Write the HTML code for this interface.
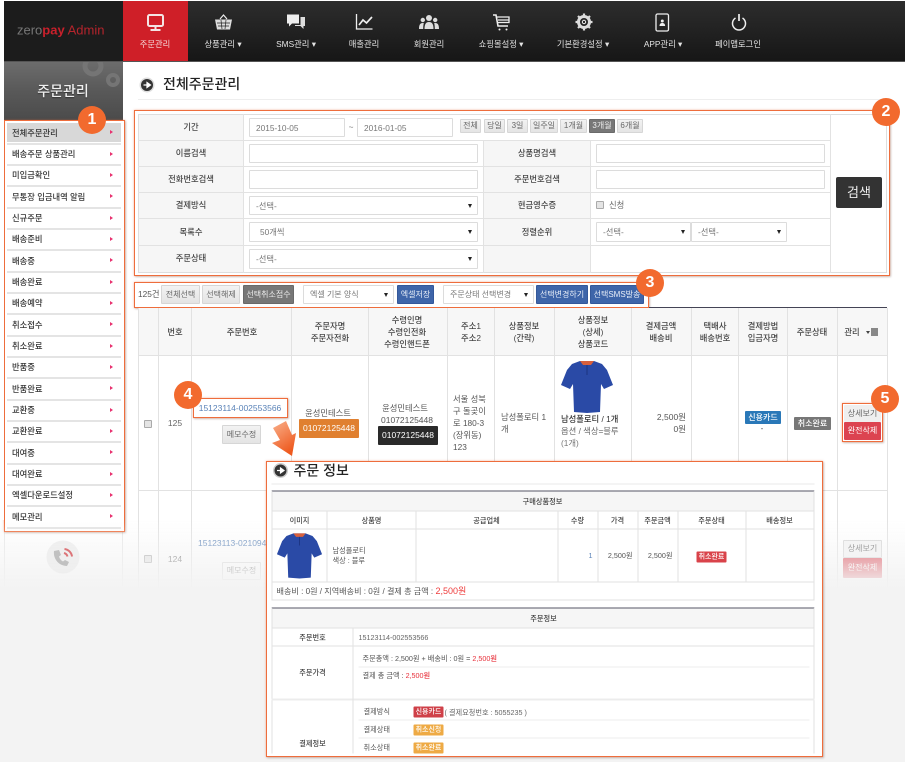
<!DOCTYPE html>
<html lang="ko"><head><meta charset="utf-8"><title>주문관리</title>
<style>
*{box-sizing:border-box}
html,body{margin:0;padding:0;background:#fff}
body{width:905px;height:762px;position:relative;overflow:hidden;font-family:"Liberation Sans","Noto Sans CJK KR",sans-serif;font-size:8.3px;color:#444}
#w{position:absolute;left:0;top:0;width:905px;height:762px;overflow:hidden;filter:blur(.3px)}
.a{position:absolute}
.c,.l,.r{position:absolute;white-space:nowrap;line-height:1}
.c{transform:translate(-50%,-50%)}
.l{transform:translateY(-50%)}
.r{transform:translate(-100%,-50%)}
.h{background:#e2e2e2;position:absolute}
.nav{color:#e4e4e4;font-size:8.3px}
.m{left:12px;color:#333;font-weight:500;font-size:8.3px}
.ar{position:absolute;left:110px;width:0;height:0;border-left:3px solid #e8316f;border-top:2.5px solid transparent;border-bottom:2.5px solid transparent}
.sep{position:absolute;left:7px;width:114px;height:2px;background:#e4e4e4}
.b{position:absolute;display:flex;align-items:center;justify-content:center;white-space:nowrap;line-height:1;font-size:8px;border-radius:1px}
.g{background:linear-gradient(#f2f2f2,#e4e4e4);border:1px solid #d6d6d6;color:#666}
.dk{background:#777;border:1px solid #6a6a6a;color:#eee}
.bl{background:#3e65a9;color:#e8eef8;border:1px solid #34589a}
.in{position:absolute;background:#fff;border:1px solid #dcdcdc;border-radius:1px;color:#777;font-size:8.3px;display:flex;align-items:center;padding-left:6px;white-space:nowrap}
.in i{position:absolute;right:5px;top:50%;margin-top:-2px;width:0;height:0;border-left:2.5px solid transparent;border-right:2.5px solid transparent;border-top:4px solid #222}
.lab{font-weight:500;color:#444}
.n{position:absolute;width:28px;height:28px;border-radius:50%;background:#f26a2e;color:#fff;font-weight:700;font-size:16px;display:flex;align-items:center;justify-content:center;z-index:30;font-family:"Liberation Sans",sans-serif}
.o{position:absolute;border:1.5px solid #ee6d3c;box-shadow:0 0 2px rgba(238,109,60,.5),1px 1px 2px rgba(0,0,0,.2)}
.cb{position:absolute;width:8px;height:8px;background:#e4e4e4;border:1px solid #aaa;border-radius:1px}
.ic{position:absolute;fill:none;stroke:#eee;stroke-width:1.6}
.p{font-size:7.2px}
</style></head><body><div id="w">

<!-- top bar -->
<div class="a" style="left:4px;top:1px;width:901px;height:61px;background:linear-gradient(#2d2d2d,#161616);border-bottom:1px solid #555"></div>
<div class="a" style="left:4px;top:1px;width:119px;height:60px;background:#1c1c1c"></div>
<div class="l" style="left:17px;top:30px;font-size:13px;color:#777">zero<span style="color:#c9202b;font-weight:700">pay</span> <span style="color:#b5242c">Admin</span></div>
<div class="a" style="left:123px;top:1px;width:65px;height:60px;background:#cf1f28"></div>

<svg class="ic" style="left:146px;top:13px;stroke:#f4e4e4" width="19" height="19" viewBox="0 0 19 19"><rect x="2" y="2" width="15" height="11" rx="1.5" stroke-width="2"/><path d="M9.5 13v3M4.5 17h10" stroke-width="2"/></svg>
<svg class="ic" style="left:214px;top:13px" width="19" height="18" viewBox="0 0 19 18"><path d="M6 6l3.500-4 3.500 4" stroke-width="1.200"/><path d="M1 6.500h17l-2 10H3z" fill="#ddd" stroke="none"/><path d="M3 10h13M4 13h11M7 7l1 9M12 7l-1 9" stroke="#222" stroke-width=".7"/></svg>
<svg class="ic" style="left:286px;top:13px" width="20" height="18" viewBox="0 0 20 18"><path d="M1 1.500h12v9H6l-3 3v-3H1z" fill="#eee" stroke="none"/><path d="M14.500 4H19v9h-1.500v3l-3-3H9v-1h5.500z" fill="#ddd" stroke="none"/></svg>
<svg class="ic" style="left:355px;top:13px" width="19" height="18" viewBox="0 0 19 18"><path d="M1.500 1v15h16" stroke-width="1.300"/><path d="M4 12l4-5 3.500 3L17 4" stroke-width="1.700"/></svg>
<svg class="ic" style="left:419px;top:14px" width="20" height="16" viewBox="0 0 20 16"><g fill="#ddd" stroke="none"><circle cx="10" cy="4" r="3"/><path d="M5.500 15c0-5 1.500-7 4.500-7s4.500 2 4.500 7z"/><circle cx="3.800" cy="6" r="2.200"/><path d="M0 15c0-4 1-6 3.800-6 .8 0 1 .2 1 .2C4.300 11 4.200 13 4.200 15z"/><circle cx="16.200" cy="6" r="2.200"/><path d="M20 15c0-4-1-6-3.800-6-.8 0-1 .2-1 .2.500 1.800.6 3.800.6 5.800z"/></g></svg>
<svg class="ic" style="left:492px;top:13px" width="19" height="19" viewBox="0 0 19 19"><path d="M1 2h3l2 11h10" stroke-width="1.600"/><path d="M5 4h12v5.500H6M6 7h11" stroke-width="1.300"/><circle cx="7.500" cy="16.500" r="1" fill="#eee" stroke="none"/><circle cx="14.500" cy="16.500" r="1" fill="#eee" stroke="none"/></svg>
<svg class="ic" style="left:575px;top:13px" width="18" height="18" viewBox="0 0 18 18"><circle cx="9" cy="9" r="5.500" stroke="#ddd" stroke-width="3"/><circle cx="9" cy="9" r="1.700" stroke-width="1"/><path d="M9 .5v3M9 14.500v3M.5 9h3M14.500 9h3M3 3l2 2M13 13l2 2M15 3l-2 2M5 13l-2 2" stroke="#ddd" stroke-width="2.200"/></svg>
<svg class="ic" style="left:655px;top:13px" width="15" height="19" viewBox="0 0 15 19"><rect x="1" y="1" width="12.500" height="17" rx="1.500" stroke-width="1.300"/><circle cx="7.300" cy="8" r="1.500" fill="#eee" stroke="none"/><path d="M4.500 13c0-2 1-3 2.800-3s2.800 1 2.800 3z" fill="#eee" stroke="none"/></svg>
<svg class="ic" style="left:731px;top:13px" width="16" height="18" viewBox="0 0 16 18"><path d="M4.500 5A6.500 6.500 0 1 0 11.500 5" stroke-width="1.500"/><path d="M8 1v7" stroke-width="1.700"/></svg>

<div class="c nav" style="left:155px;top:44px;color:#f5dcdc">주문관리</div>
<div class="c nav" style="left:223px;top:44px">상품관리 ▾</div>
<div class="c nav" style="left:296px;top:44px">SMS관리 ▾</div>
<div class="c nav" style="left:364px;top:44px">매출관리</div>
<div class="c nav" style="left:429px;top:44px">회원관리</div>
<div class="c nav" style="left:501px;top:44px">쇼핑몰설정 ▾</div>
<div class="c nav" style="left:583px;top:44px">기본환경설정 ▾</div>
<div class="c nav" style="left:663px;top:44px">APP관리 ▾</div>
<div class="c nav" style="left:738px;top:44px">페이앱로그인</div>

<!-- sidebar -->
<div class="a" style="left:4px;top:62px;width:119px;height:60px;background:linear-gradient(#6c6c6c,#585858 50%,#4a4a4a)"></div>
<svg class="a" style="left:76px;top:62px" width="47" height="30" viewBox="0 0 47 30"><g fill="none" stroke="#757575"><circle cx="17" cy="4" r="8" stroke-width="5"/><circle cx="37" cy="18" r="5" stroke-width="4"/></g></svg>
<div class="c" style="left:63px;top:91px;font-size:14px;color:#f0f0f0;font-weight:500;text-shadow:0 1px 1px #333">주문관리</div>
<div class="a" style="left:4px;top:532px;width:1px;height:60px;background:#e8e8e8"></div>
<div class="a" style="left:122px;top:532px;width:1px;height:60px;background:#e8e8e8"></div>

<div class="o" style="left:4px;top:120px;width:121px;height:412px;background:#fff"></div>
<div class="a" style="left:7px;top:123px;width:114px;height:19px;background:#d8d8d8"></div>
<div class="sep" style="top:143px"></div><div class="sep" style="top:164px"></div><div class="sep" style="top:185px"></div><div class="sep" style="top:207px"></div><div class="sep" style="top:228px"></div><div class="sep" style="top:249px"></div><div class="sep" style="top:271px"></div><div class="sep" style="top:292px"></div><div class="sep" style="top:313px"></div><div class="sep" style="top:335px"></div><div class="sep" style="top:356px"></div><div class="sep" style="top:377px"></div><div class="sep" style="top:399px"></div><div class="sep" style="top:420px"></div><div class="sep" style="top:441px"></div><div class="sep" style="top:463px"></div><div class="sep" style="top:484px"></div><div class="sep" style="top:505px"></div><div class="sep" style="top:527px"></div>
<div class="l m" style="top:132.500px">전체주문관리</div><div class="ar" style="top:130px"></div>
<div class="l m" style="top:154px">배송주문 상품관리</div><div class="ar" style="top:151.500px"></div>
<div class="l m" style="top:175px">미입금확인</div><div class="ar" style="top:172.500px"></div>
<div class="l m" style="top:196.500px">무통장 입금내역 알림</div><div class="ar" style="top:194px"></div>
<div class="l m" style="top:218px">신규주문</div><div class="ar" style="top:215.500px"></div>
<div class="l m" style="top:239px">배송준비</div><div class="ar" style="top:236.500px"></div>
<div class="l m" style="top:260.500px">배송중</div><div class="ar" style="top:258px"></div>
<div class="l m" style="top:282px">배송완료</div><div class="ar" style="top:279.500px"></div>
<div class="l m" style="top:303px">배송예약</div><div class="ar" style="top:300.500px"></div>
<div class="l m" style="top:324.500px">취소접수</div><div class="ar" style="top:322px"></div>
<div class="l m" style="top:346px">취소완료</div><div class="ar" style="top:343.500px"></div>
<div class="l m" style="top:367px">반품중</div><div class="ar" style="top:364.500px"></div>
<div class="l m" style="top:388.500px">반품완료</div><div class="ar" style="top:386px"></div>
<div class="l m" style="top:410px">교환중</div><div class="ar" style="top:407.500px"></div>
<div class="l m" style="top:431px">교환완료</div><div class="ar" style="top:428.500px"></div>
<div class="l m" style="top:452.500px">대여중</div><div class="ar" style="top:450px"></div>
<div class="l m" style="top:474px">대여완료</div><div class="ar" style="top:471.500px"></div>
<div class="l m" style="top:495px">엑셀다운로드설정</div><div class="ar" style="top:492.500px"></div>
<div class="l m" style="top:516.500px">메모관리</div><div class="ar" style="top:514px"></div>

<svg class="a" style="left:46px;top:540px;z-index:6;opacity:.9" width="34" height="34" viewBox="0 0 34 34"><circle cx="17" cy="17" r="16.500" fill="#eee"/><path d="M8 11c-1 8 5 15 13 15l2-4-4-2-2 1.500c-2-1-3.500-3-4-5l2-1.500-2-5z" fill="#bbb"/><path d="M18 13c2 .5 3 1.500 3.500 3.500M18.500 9c4 .5 7 3.500 7.500 7.500" fill="none" stroke="#d9666a" stroke-width="2"/></svg>

<!-- page title -->
<svg class="a" style="left:139px;top:77px" width="16" height="16" viewBox="0 0 16 16"><circle cx="8" cy="8" r="7.500" fill="#ddd"/><circle cx="8" cy="8" r="6" fill="#333"/><path d="M4.500 8h4M8 5.500L11.500 8 8 10.500z" stroke="#fff" stroke-width="1.200" fill="#fff"/></svg>
<div class="l" style="left:163px;top:84px;font-size:14px;color:#222;font-weight:500">전체주문관리</div>
<div class="a" style="left:138px;top:99px;width:750px;height:1px;background:#eee"></div>

<!-- search -->
<div class="o" style="left:134px;top:110px;width:756px;height:166px;background:#fff"></div>
<div class="a" style="left:138px;top:114px;width:749px;height:159px;border:1px solid #dedede"></div>
<div class="a" style="left:139px;top:115px;width:104px;height:157px;background:#f6f6f6"></div>
<div class="a" style="left:483px;top:140px;width:107px;height:132px;background:#f6f6f6"></div>
<div class="h" style="left:243px;top:114px;width:1px;height:159px"></div>
<div class="h" style="left:483px;top:140px;width:1px;height:133px"></div>
<div class="h" style="left:590px;top:140px;width:1px;height:133px"></div>
<div class="h" style="left:830px;top:114px;width:1px;height:159px"></div>
<div class="h" style="left:138px;top:140px;width:692px;height:1px"></div>
<div class="h" style="left:138px;top:166px;width:692px;height:1px"></div>
<div class="h" style="left:138px;top:192px;width:692px;height:1px"></div>
<div class="h" style="left:138px;top:218px;width:692px;height:1px"></div>
<div class="h" style="left:138px;top:245px;width:692px;height:1px"></div>

<div class="c lab" style="left:191px;top:127px">기간</div>
<div class="c lab" style="left:191px;top:153px">이름검색</div>
<div class="c lab" style="left:191px;top:179px">전화번호검색</div>
<div class="c lab" style="left:191px;top:205px">결제방식</div>
<div class="c lab" style="left:191px;top:232px">목록수</div>
<div class="c lab" style="left:191px;top:258px">주문상태</div>
<div class="c lab" style="left:537px;top:153px">상품명검색</div>
<div class="c lab" style="left:537px;top:179px">주문번호검색</div>
<div class="c lab" style="left:537px;top:205px">현금영수증</div>
<div class="c lab" style="left:537px;top:232px">정렬순위</div>

<div class="in" style="left:249px;top:118px;width:96px;height:19px">2015-10-05</div>
<div class="c" style="left:351px;top:127px;color:#777">~</div>
<div class="in" style="left:357px;top:118px;width:96px;height:19px">2016-01-05</div>
<div class="b g" style="left:460px;top:119px;width:21px;height:14px">전체</div>
<div class="b g" style="left:484px;top:119px;width:21px;height:14px">당일</div>
<div class="b g" style="left:507px;top:119px;width:21px;height:14px">3일</div>
<div class="b g" style="left:530px;top:119px;width:28px;height:14px">일주일</div>
<div class="b g" style="left:560px;top:119px;width:27px;height:14px">1개월</div>
<div class="b dk" style="left:589px;top:119px;width:26px;height:14px">3개월</div>
<div class="b g" style="left:617px;top:119px;width:26px;height:14px">6개월</div>

<div class="in" style="left:249px;top:144px;width:229px;height:19px"></div>
<div class="in" style="left:249px;top:170px;width:229px;height:19px"></div>
<div class="in" style="left:249px;top:196px;width:229px;height:19px">-선택-<i></i></div>
<div class="in" style="left:249px;top:222px;width:229px;height:20px;padding-left:10px">50개씩<i></i></div>
<div class="in" style="left:249px;top:249px;width:229px;height:20px">-선택-<i></i></div>
<div class="in" style="left:596px;top:144px;width:229px;height:19px"></div>
<div class="in" style="left:596px;top:170px;width:229px;height:19px"></div>
<div class="cb" style="left:596px;top:201px"></div>
<div class="l" style="left:609px;top:205px;color:#666">신청</div>
<div class="in" style="left:596px;top:222px;width:95px;height:20px">-선택-<i></i></div>
<div class="in" style="left:691px;top:222px;width:96px;height:20px">-선택-<i></i></div>
<div class="b" style="left:836px;top:177px;width:46px;height:31px;background:#333;color:#eee;font-size:13px;border-radius:2px">검색</div>

<!-- toolbar -->
<div class="o" style="left:134px;top:282px;width:515px;height:26px;background:#fff"></div>
<div class="l" style="left:138px;top:294px;color:#555">125건</div>
<div class="b g" style="left:161px;top:285px;width:39px;height:19px">전체선택</div>
<div class="b g" style="left:202px;top:285px;width:38px;height:19px">선택해제</div>
<div class="b dk" style="left:243px;top:285px;width:51px;height:19px">선택취소접수</div>
<div class="in" style="left:303px;top:285px;width:91px;height:19px;font-size:8px">엑셀 기본 양식<i></i></div>
<div class="b bl" style="left:397px;top:285px;width:37px;height:19px">엑셀저장</div>
<div class="in" style="left:443px;top:285px;width:91px;height:19px;font-size:8px">주문상태 선택변경<i></i></div>
<div class="b bl" style="left:536px;top:285px;width:52px;height:19px">선택변경하기</div>
<div class="b bl" style="left:590px;top:285px;width:54px;height:19px">선택SMS발송</div>

<!-- table -->
<div class="a" style="left:649px;top:307px;width:238px;height:1px;background:#445"></div>
<div class="a" style="left:138px;top:308px;width:749px;height:47px;background:#f7f7f7"></div>
<div class="h" style="left:138px;top:355px;width:750px;height:1px"></div>
<div class="h" style="left:138px;top:490px;width:750px;height:1px"></div>
<div class="h" style="left:138px;top:308px;width:1px;height:300px"></div>
<div class="h" style="left:158px;top:308px;width:1px;height:300px"></div>
<div class="h" style="left:191px;top:308px;width:1px;height:300px"></div>
<div class="h" style="left:291px;top:308px;width:1px;height:300px"></div>
<div class="h" style="left:368px;top:308px;width:1px;height:300px"></div>
<div class="h" style="left:447px;top:308px;width:1px;height:300px"></div>
<div class="h" style="left:494px;top:308px;width:1px;height:300px"></div>
<div class="h" style="left:554px;top:308px;width:1px;height:300px"></div>
<div class="h" style="left:631px;top:308px;width:1px;height:300px"></div>
<div class="h" style="left:691px;top:308px;width:1px;height:300px"></div>
<div class="h" style="left:738px;top:308px;width:1px;height:300px"></div>
<div class="h" style="left:787px;top:308px;width:1px;height:300px"></div>
<div class="h" style="left:837px;top:308px;width:1px;height:300px"></div>
<div class="h" style="left:887px;top:308px;width:1px;height:300px"></div>

<div class="c lab" style="left:175px;top:332px">번호</div>
<div class="c lab" style="left:242px;top:332px">주문번호</div>
<div class="c lab" style="left:330px;top:326px">주문자명</div><div class="c lab" style="left:330px;top:338px">주문자전화</div>
<div class="c lab" style="left:407px;top:320px">수령인명</div><div class="c lab" style="left:407px;top:332px">수령인전화</div><div class="c lab" style="left:407px;top:344px">수령인핸드폰</div>
<div class="c lab" style="left:471px;top:326px">주소1</div><div class="c lab" style="left:471px;top:338px">주소2</div>
<div class="c lab" style="left:524px;top:326px">상품정보</div><div class="c lab" style="left:524px;top:338px">(간략)</div>
<div class="c lab" style="left:593px;top:320px">상품정보</div><div class="c lab" style="left:593px;top:332px">(상세)</div><div class="c lab" style="left:593px;top:344px">상품코드</div>
<div class="c lab" style="left:661px;top:326px">결제금액</div><div class="c lab" style="left:661px;top:338px">배송비</div>
<div class="c lab" style="left:715px;top:326px">택배사</div><div class="c lab" style="left:715px;top:338px">배송번호</div>
<div class="c lab" style="left:763px;top:326px">결제방법</div><div class="c lab" style="left:763px;top:338px">입금자명</div>
<div class="c lab" style="left:812px;top:332px">주문상태</div>
<div class="c lab" style="left:852px;top:332px">관리</div>
<div class="a" style="left:866px;top:331px;width:0;height:0;border-left:2px solid transparent;border-right:2px solid transparent;border-top:3px solid #444"></div>
<div class="a" style="left:871px;top:328px;width:7px;height:8px;background:#888"></div>

<!-- row 1 -->
<div class="cb" style="left:144px;top:420px"></div>
<div class="c" style="left:175px;top:423px;color:#666;font-size:8.5px">125</div>
<div class="o" style="left:193px;top:398px;width:95px;height:20px;background:#fff;border-width:1px"></div>
<div class="c" style="left:240px;top:408px;color:#5a83b8;font-size:8.5px">15123114-002553566</div>
<div class="b g" style="left:222px;top:425px;width:39px;height:19px">메모수정</div>
<div class="c" style="left:328px;top:413px;color:#555">윤성민테스트</div>
<div class="b" style="left:299px;top:419px;width:60px;height:19px;background:#e08030;color:#fff;font-size:8.5px">01072125448</div>
<div class="c" style="left:405px;top:408px;color:#555">윤성민테스트</div>
<div class="c" style="left:407px;top:420px;color:#555;font-size:8.5px">01072125448</div>
<div class="b" style="left:378px;top:426px;width:60px;height:19px;background:#2a2a2a;color:#fff;font-size:8.5px">01072125448</div>
<div class="l" style="left:453px;top:399px;color:#555">서울 성북</div>
<div class="l" style="left:453px;top:411px;color:#555">구 돌곶이</div>
<div class="l" style="left:453px;top:423px;color:#555">로 180-3</div>
<div class="l" style="left:453px;top:435px;color:#555">(장위동)</div>
<div class="l" style="left:453px;top:447px;color:#555">123</div>
<div class="l" style="left:501px;top:417px;color:#555">남성폴로티 1</div>
<div class="l" style="left:501px;top:429px;color:#555">개</div>
<svg class="a" style="left:561px;top:360px" width="52" height="53" viewBox="0 0 52 53"><path d="M19 1h14l8 3 5 6 6 15-9 4-3-5-1 28-13 1-13-1-1-28-3 5-9-4 6-15 5-6z" fill="#2a4aa6"/><path d="M19 1h14l-3 4h-8z" fill="#d8603c"/><path d="M26 5v10" stroke="#1c3480" fill="none"/></svg>
<div class="l" style="left:561px;top:419px;color:#333;font-weight:500">남성폴로티 / 1개</div>
<div class="l" style="left:561px;top:431px;color:#666">옵션 / 색상=블루</div>
<div class="l" style="left:561px;top:443px;color:#777">(1개)</div>
<div class="r" style="left:686px;top:417px;color:#555;font-size:8.5px">2,500원</div>
<div class="r" style="left:686px;top:429px;color:#555;font-size:8.5px">0원</div>
<div class="b" style="left:745px;top:411px;width:36px;height:13px;background:#2a78b8;color:#fff;font-weight:500;font-size:8px">신용카드</div>
<div class="c" style="left:762px;top:428px;color:#555">-</div>
<div class="b" style="left:794px;top:417px;width:37px;height:13px;background:#777;color:#fff;font-weight:500;font-size:8px">취소완료</div>
<div class="o" style="left:842px;top:403px;width:41px;height:39px;background:#fff"></div>
<div class="b" style="left:844px;top:405px;width:37px;height:17px;background:#efefef;color:#666;font-size:8px">상세보기</div>
<div class="b" style="left:844px;top:422px;width:37px;height:18px;background:#dc4350;color:#fff;font-size:8px">완전삭제</div>

<!-- row 2 -->
<div class="cb" style="left:144px;top:555px"></div>
<div class="c" style="left:175px;top:559px;color:#666;font-size:8.5px">124</div>
<div class="l" style="left:198px;top:543px;color:#5a83b8;font-size:8.5px">15123113-021094</div>
<div class="b g" style="left:222px;top:562px;width:39px;height:18px;background:#fff">메모수정</div>
<div class="b g" style="left:843px;top:540px;width:39px;height:18px;background:#f4f4f4">상세보기</div>
<div class="b" style="left:843px;top:558px;width:39px;height:20px;background:#dc4350;color:#fff;font-size:8px">완전삭제</div>

<!-- fade -->
<div class="a" style="left:0;top:520px;width:905px;height:72px;background:linear-gradient(rgba(243,243,243,0),rgba(243,243,243,1) 95%);z-index:5"></div>
<div class="a" style="left:0;top:592px;width:905px;height:170px;background:#f3f3f3;z-index:5"></div>
<div class="a" style="left:0;top:0;width:4px;height:520px;background:#fff;z-index:4"></div>

<!-- arrow -->
<svg class="a" style="left:268px;top:418px;z-index:7" width="32" height="42" viewBox="268 418 32 42"><defs><linearGradient id="ga" x1="0" y1="0" x2=".5" y2="1"><stop offset="0" stop-color="#f9b18c"/><stop offset="1" stop-color="#ee5a1f"/></linearGradient></defs><polygon points="273,428 286,421 292,435 296,433 292,456 272,443 280,440" fill="url(#ga)"/></svg>

<!-- popup -->
<div class="o" style="left:266px;top:461px;width:557px;height:296px;background:#fff;z-index:10;overflow:hidden">
 <div class="a" style="left:0;top:0;width:553px;height:292px;transform:translate(-267.500px,-462.500px);transform-origin:0 0"><div style="position:absolute;left:0;top:0;width:905px;height:762px">

 <svg class="a" style="left:273px;top:463px" width="16" height="16" viewBox="0 0 16 16"><circle cx="8" cy="8" r="7.500" fill="#ccc"/><circle cx="8" cy="8" r="6" fill="#333"/><path d="M4.500 8h4M8 5.500L11.500 8 8 10.500z" stroke="#fff" stroke-width="1.200" fill="#fff"/></svg>
 <div class="l" style="left:294px;top:471px;font-size:14px;color:#222;font-weight:500">주문 정보</div>
 <div class="a" style="left:272px;top:484px;width:543px;height:1px;background:#e8e8e8"></div>

 <div class="a" style="left:272px;top:491px;width:543px;height:110px;border:1px solid #e0e0e0;border-top:1px solid #556"></div>
 <div class="a" style="left:273px;top:492px;width:541px;height:19px;background:#f6f6f6"></div>
 <div class="h" style="left:272px;top:511px;width:543px;height:1px"></div>
 <div class="h" style="left:272px;top:529px;width:543px;height:1px"></div>
 <div class="h" style="left:272px;top:582px;width:543px;height:1px"></div>
 <div class="h" style="left:327px;top:511px;width:1px;height:71px"></div>
 <div class="h" style="left:416px;top:511px;width:1px;height:71px"></div>
 <div class="h" style="left:558px;top:511px;width:1px;height:71px"></div>
 <div class="h" style="left:598px;top:511px;width:1px;height:71px"></div>
 <div class="h" style="left:638px;top:511px;width:1px;height:71px"></div>
 <div class="h" style="left:678px;top:511px;width:1px;height:71px"></div>
 <div class="h" style="left:746px;top:511px;width:1px;height:71px"></div>
 <div class="c lab p" style="left:543px;top:501.500px">구매상품정보</div>
 <div class="c lab p" style="left:300px;top:520.500px">이미지</div>
 <div class="c lab p" style="left:372px;top:520.500px">상품명</div>
 <div class="c lab p" style="left:487px;top:520.500px">공급업체</div>
 <div class="c lab p" style="left:578px;top:520.500px">수량</div>
 <div class="c lab p" style="left:618px;top:520.500px">가격</div>
 <div class="c lab p" style="left:658px;top:520.500px">주문금액</div>
 <div class="c lab p" style="left:712px;top:520.500px">주문상태</div>
 <div class="c lab p" style="left:780px;top:520.500px">배송정보</div>
 <svg class="a" style="left:277px;top:533px" width="46" height="46" viewBox="0 0 52 53"><path d="M19 1h14l8 3 5 6 6 15-9 4-3-5-1 28-13 1-13-1-1-28-3 5-9-4 6-15 5-6z" fill="#2a4aa6"/><path d="M19 1h14l-3 4h-8z" fill="#d8603c"/><path d="M26 5v10" stroke="#1c3480" fill="none"/></svg>
 <div class="l p" style="left:333px;top:551px;color:#555">남성폴로티</div>
 <div class="l p" style="left:333px;top:561px;color:#555">색상 : 블루</div>
 <div class="r p" style="left:593px;top:556px;color:#5a83b8">1</div>
 <div class="r p" style="left:633px;top:556px;color:#555">2,500원</div>
 <div class="r p" style="left:673px;top:556px;color:#555">2,500원</div>
 <div class="b" style="left:697px;top:552px;width:30px;height:11px;background:#d9434a;color:#fff;font-size:7px;font-weight:500">취소완료</div>
 <div class="l" style="left:277px;top:592px;font-size:8.100px;color:#555">배송비 : 0원 / 지역배송비 : 0원 / 결제 총 금액 : <span style="color:#ee3c3c;font-size:9px">2,500원</span></div>

 <div class="a" style="left:272px;top:608px;width:543px;height:160px;border:1px solid #e0e0e0;border-top:1px solid #556"></div>
 <div class="a" style="left:273px;top:609px;width:541px;height:19px;background:#f6f6f6"></div>
 <div class="h" style="left:272px;top:628px;width:543px;height:1px"></div>
 <div class="h" style="left:272px;top:646px;width:543px;height:1px"></div>
 <div class="h" style="left:272px;top:699px;width:543px;height:2px;background:#ececec"></div>
 <div class="h" style="left:353px;top:629px;width:1px;height:130px"></div>
 <div class="h" style="left:359px;top:667px;width:451px;height:1px;background:#eee"></div>
 <div class="h" style="left:359px;top:720px;width:451px;height:1px;background:#eee"></div>
 <div class="h" style="left:359px;top:738px;width:451px;height:1px;background:#eee"></div>
 <div class="c lab p" style="left:544px;top:619px">주문정보</div>
 <div class="c lab p" style="left:313px;top:638px">주문번호</div>
 <div class="c lab p" style="left:313px;top:673px">주문가격</div>
 <div class="c lab p" style="left:313px;top:744px">결제정보</div>
 <div class="l p" style="left:359px;top:638px;color:#666">15123114-002553566</div>
 <div class="l p" style="left:363px;top:659px;color:#555">주문총액 : 2,500원 + 배송비 : 0원 = <span style="color:#e8323c;font-weight:500">2,500원</span></div>
 <div class="l p" style="left:363px;top:676px;color:#555">결제 총 금액 : <span style="color:#e8323c;font-weight:500">2,500원</span></div>
 <div class="l p" style="left:364px;top:712px;color:#555">결제방식</div>
 <div class="l p" style="left:364px;top:730px;color:#555">결제상태</div>
 <div class="l p" style="left:364px;top:748px;color:#555">취소상태</div>
 <div class="b" style="left:414px;top:707px;width:30px;height:11px;background:#cf4048;color:#fff;font-size:7px;font-weight:500">신용카드</div>
 <div class="l p" style="left:445px;top:712.500px;color:#666">( 결제요청번호 : 5055235 )</div>
 <div class="b" style="left:414px;top:725px;width:30px;height:11px;background:#eeaa44;color:#fff;font-size:7px;font-weight:500">취소신청</div>
 <div class="b" style="left:414px;top:743px;width:30px;height:11px;background:#eeaa44;color:#fff;font-size:7px;font-weight:500">취소완료</div>
 <div class="a" style="left:268px;top:754px;width:553px;height:10px;background:#fff"></div>
 </div></div>
</div>

<!-- number badges -->
<div class="n" style="left:78px;top:106px">1</div>
<div class="n" style="left:872px;top:98px">2</div>
<div class="n" style="left:636px;top:269px">3</div>
<div class="n" style="left:174px;top:381px">4</div>
<div class="n" style="left:871px;top:385px">5</div>

</div></body></html>
